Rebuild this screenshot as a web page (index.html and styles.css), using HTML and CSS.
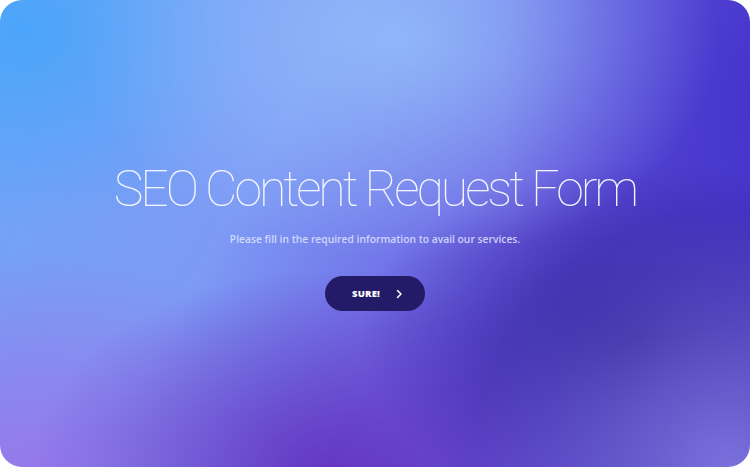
FILE: index.html
```html
<!DOCTYPE html>
<html>
<head>
<meta charset="utf-8">
<link rel="stylesheet" href="styles.css">
</head>
<body>
<main class="card">
  <h1 class="title">SEO Content Request Form</h1>
  <p class="sub">Please fill in the required information to avail our services.</p>
  <button class="btn"><span>SURE!</span>
    <svg width="10" height="10" viewBox="0 0 10 10"><path d="M3.5 1.5 L7 5 L3.5 8.5" fill="none" stroke="#fff" stroke-width="1.5" stroke-linecap="round" stroke-linejoin="round"/></svg>
  </button>
</main>
</body>
</html>
```
FILE: styles.css
```css
html, body { margin: 0; padding: 0; background: #fff; }
.card {
  width: 750px; height: 467px; box-sizing: border-box;
  border-radius: 22px; overflow: hidden;
  display: flex; flex-direction: column; align-items: center;
  padding-top: 159px;
  background:
    radial-gradient(ellipse 320px 220px at 400px 40px, rgba(150,192,250,0.8), rgba(150,192,250,0) 100%),
    radial-gradient(ellipse 260px 260px at 730px 470px, rgba(130,120,225,0.9), rgba(130,120,225,0) 100%),
    radial-gradient(ellipse 280px 180px at 640px 340px, rgba(45,30,150,0.95), rgba(45,30,150,0) 100%),
    radial-gradient(ellipse 300px 200px at 330px 470px, rgba(100,50,190,0.9), rgba(100,50,190,0) 100%),
    radial-gradient(ellipse 260px 220px at 30px 470px, rgba(150,120,235,1), rgba(150,120,235,0) 100%),
    radial-gradient(ellipse 240px 200px at 20px 30px, rgba(75,165,250,1), rgba(75,165,250,0) 100%),
    radial-gradient(ellipse 260px 420px at 760px 100px, rgba(68,52,205,1), rgba(68,52,205,0) 100%),
    linear-gradient(120deg, #6ea6f8 0%, #7d9af5 35%, #6a5be0 65%, #3d2fb0 100%);
}
.title {
  margin: 0;
  font-family: Roboto, "Liberation Sans", sans-serif;
  font-weight: 100;
  font-size: 50px;
  letter-spacing: -3px;
  color: #f4f6ff;
  line-height: 60px;
}
.sub {
  margin: 13px 0 0;
  font-family: "Open Sans", "Liberation Sans", sans-serif;
  font-weight: 600;
  font-size: 10.3px;
  color: rgba(225,230,255,0.85);
}
.btn {
  margin-top: 30px;
  width: 100px; height: 35px;
  border: none; border-radius: 18px;
  background: #231b68;
  display: flex; align-items: center; justify-content: center; gap: 14px;
  padding: 0 0 0 6px;
  color: #fff;
  font-family: "Open Sans", "Liberation Sans", sans-serif;
  font-weight: 800;
  font-size: 9.5px;
  letter-spacing: 0.2px;
}
.btn svg { display: block; }
```
